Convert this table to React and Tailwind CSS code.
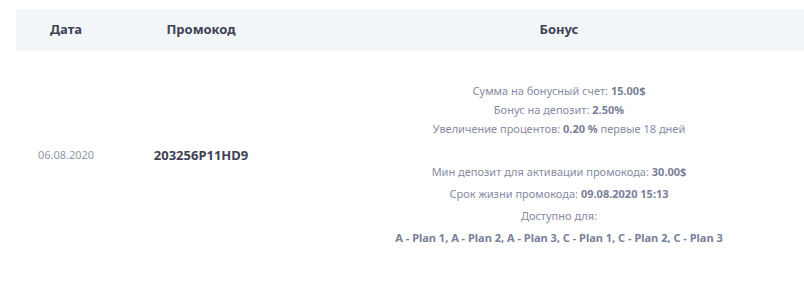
const bonusTop = [
  { label: "Сумма на бонусный счет:", value: "15.00$" },
  { label: "Бонус на депозит:", value: "2.50%" },
  { label: "Увеличение процентов:", value: "0.20 %", tail: "первые 18 дней" },
];

const bonusBottom = [
  { label: "Мин депозит для активации промокода:", value: "30.00$" },
  { label: "Срок жизни промокода:", value: "09.08.2020 15:13" },
  { label: "Доступно для:" },
];

export default function App() {
  return (
    <div
      className="w-[804px] h-[297px] overflow-hidden bg-white"
      style={{ fontFamily: '"Noto Sans", "Open Sans", sans-serif' }}
    >
      <div className="w-[816px] ml-4 mt-[9px]">
        <div className="grid grid-cols-[100px_170px_546px] h-[42px] items-center bg-[#f3f6f9] text-[13px] font-bold text-[#3f4254]">
          <div className="text-center">Дата</div>
          <div className="text-center">Промокод</div>
          <div className="text-center">Бонус</div>
        </div>
        <div className="grid grid-cols-[100px_170px_546px] items-start pb-8">
          <div className="text-center text-[11px] leading-5 text-[#9397a9] pt-[94px]">06.08.2020</div>
          <div className="text-center text-[13px] leading-5 font-bold text-[#3f4254] pt-[94px]">203256P11HD9</div>
          <div className="text-center text-[11px] text-[#878ba3] pt-[30px]">
            {bonusTop.map((b) => (
              <div key={b.label} className="leading-[19px]">
                {b.label} <span className="font-bold text-[#7a7e98]">{b.value}</span>
                {b.tail && ` ${b.tail}`}
              </div>
            ))}
            <div className="mt-[23px]">
              {bonusBottom.map((b) => (
                <div key={b.label} className="leading-[22px]">
                  {b.label} {b.value && <span className="font-bold text-[#7a7e98]">{b.value}</span>}
                </div>
              ))}
              <div className="leading-[22px] font-bold text-[#7a7e98]">
                A - Plan 1, A - Plan 2, A - Plan 3, C - Plan 1, C - Plan 2, C - Plan 3
              </div>
            </div>
          </div>
        </div>
      </div>
    </div>
  );
}
